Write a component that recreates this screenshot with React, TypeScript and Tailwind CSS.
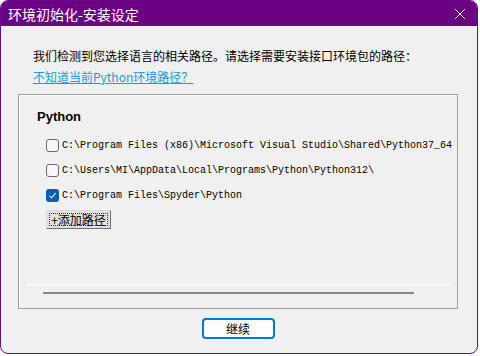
import { type ReactNode } from 'react';

const cjk = "font-['Noto_Sans_CJK_SC','Microsoft_YaHei',sans-serif]";
const mono = "font-['Liberation_Mono','Noto_Sans_CJK_SC',monospace]";

const paths = [
  { path: 'C:\\Program Files (x86)\\Microsoft Visual Studio\\Shared\\Python37_64', checked: false },
  { path: 'C:\\Users\\MI\\AppData\\Local\\Programs\\Python\\Python312\\', checked: false },
  { path: 'C:\\Program Files\\Spyder\\Python', checked: true },
];

function CheckBox({ checked }: { checked: boolean }) {
  if (checked) {
    return (
      <span className="flex h-[13px] w-[13px] items-center justify-center rounded-[3px] bg-[#005fb8]">
        <svg width="9" height="9" viewBox="0 0 9 9" fill="none">
          <path d="M1.5 4.8 L3.6 6.8 L7.6 2.2" stroke="white" strokeWidth="1.1" />
        </svg>
      </span>
    );
  }
  return <span className="h-[13px] w-[13px] rounded-[3px] border border-[#6b6b6b] bg-[#f6f6f6]" />;
}

function Row({ children }: { children: ReactNode }) {
  return <div className="flex h-[25px] items-center gap-[3px] pl-[27px]">{children}</div>;
}

export default function App() {
  return (
    <div className="h-[356px] w-[480px] bg-white">
      <div className="flex h-[354px] w-[478px] flex-col overflow-hidden rounded-[8px] border border-[#6a0a86] bg-[#f0f0f0]">
        <div className="flex h-[25px] shrink-0 items-center justify-between bg-[#6b0082] pl-[7px] pr-[11px]">
          <span className={`${cjk} text-[14px] leading-none text-white`}>环境初始化-安装设定</span>
          <svg width="12" height="12" viewBox="0 0 12 12" fill="none">
            <path d="M1 1 L11 11 M11 1 L1 11" stroke="white" strokeWidth="1" />
          </svg>
        </div>

        <div className="flex flex-col px-[17px] pt-[22px]">
          <p className={`${cjk} pl-[15px] text-[12px] leading-[16px] text-black`}>
            我们检测到您选择语言的相关路径。请选择需要安装接口环境包的路径：
          </p>
          <p className={`${cjk} mt-[5px] pl-[15px] text-[12px] leading-[16px] text-[#1a9be0] underline`}>
            不知道当前Python环境路径？
          </p>

          <div className="mt-[9px] box-border flex h-[215px] w-[440px] flex-col border border-[#a0a0a0] shadow-[inset_1px_1px_0_#ffffff] pt-[14px]">
            <div className="pl-[18px] font-['Liberation_Sans',Arial,sans-serif] text-[13px] font-bold leading-[16px] text-black">
              Python
            </div>
            <div className="mt-[8px]">
              {paths.map((p) => (
                <Row key={p.path}>
                  <CheckBox checked={p.checked} />
                  <span className={`${mono} whitespace-nowrap text-[10px] text-black`}>{p.path}</span>
                </Row>
              ))}
            </div>
            <div className="mt-[2px] pl-[27px]">
              <button className="flex h-[19px] w-[65px] items-center justify-center border border-t-[#dcdcdc] border-l-[#dcdcdc] border-r-[#6f6f6f] border-b-[#6f6f6f] bg-[#e1e1e1] p-[2px]">
                <span className={`${cjk} flex h-full w-full items-center justify-center border border-dotted border-[#303030] text-[12px] leading-none text-black`}>
                  +添加路径
                </span>
              </button>
            </div>
            <div className="mx-[7px] mt-[55px] h-px bg-white" />
            <div className="ml-[24px] mt-[7px] h-[2px] w-[371px] bg-[#888888]" />
          </div>

          <div className="mt-[9px] flex justify-center pr-[2px]">
            <button className={`${cjk} flex h-[21px] w-[73px] items-center justify-center rounded-[4px] border-2 border-[#0078d4] bg-[#fdfdfd] text-[12px] leading-none text-black`}>
              继续
            </button>
          </div>
        </div>
      </div>
    </div>
  );
}
